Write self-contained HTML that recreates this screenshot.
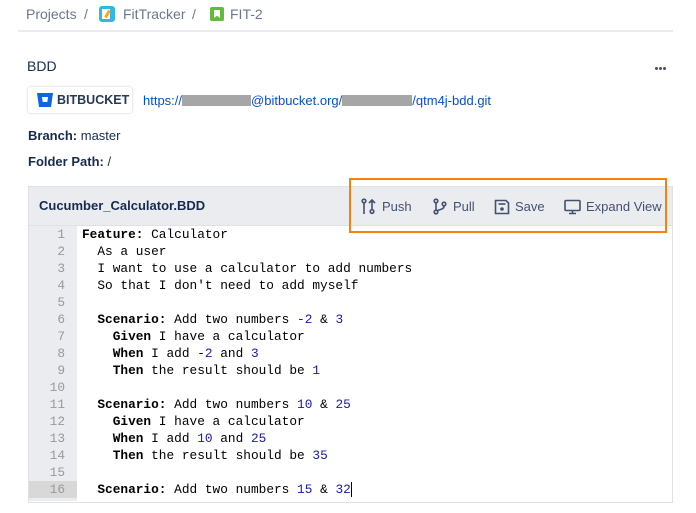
<!DOCTYPE html>
<html><head><style>
body{margin:0;width:696px;height:513px;background:#fff;font-family:"Liberation Sans",sans-serif;position:relative;overflow:hidden;color:#172b4d}
.a{position:absolute;white-space:nowrap}
.mono{font-family:"Liberation Mono",monospace;font-size:12.8px;color:#000}
.k{font-weight:bold}
.n{color:#1a1aa6}
.d{position:absolute;width:3px;height:3px;border-radius:50%;background:#42526e;top:67px}
</style></head><body>
<div class="a" style="left:26px;top:6px;font-size:14px;color:#6b778c">Projects</div>
<div class="a" style="left:84px;top:6px;font-size:14px;color:#6b778c">/</div>
<div class="a" style="left:99px;top:6px;width:16px;height:16px;background:#2fb8e6;border-radius:3px"><div style="position:absolute;left:3px;top:3px;width:8px;height:10px;background:#fff"></div><div style="position:absolute;left:7px;top:4px;width:3px;height:8px;background:#f5a623;transform:rotate(30deg)"></div></div>
<div class="a" style="left:123px;top:6px;font-size:14px;color:#6b778c">FitTracker</div>
<div class="a" style="left:192px;top:6px;font-size:14px;color:#6b778c">/</div>
<div class="a" style="left:210px;top:7px;width:14px;height:14px;background:#63ba3c;border-radius:2px"><div style="position:absolute;left:4px;top:3px;width:6px;height:8px;background:#fff;clip-path:polygon(0 0,100% 0,100% 100%,50% 70%,0 100%)"></div></div>
<div class="a" style="left:230px;top:6px;font-size:14px;color:#6b778c">FIT-2</div>
<div class="a" style="left:18px;top:30px;width:655px;height:2px;background:#ebecf0"></div>
<div class="a" style="left:27px;top:58px;font-size:14px">BDD</div>
<div class="d" style="left:655px"></div><div class="d" style="left:659px"></div><div class="d" style="left:663px"></div>
<div class="a" style="left:28px;top:87px;width:104px;height:26px;border-radius:3px;box-shadow:0 0 2px rgba(0,0,0,.25);background:#fff"></div>
<svg class="a" style="left:37px;top:93px" width="16" height="14" viewBox="0 0 16 14"><path d="M0 0H16L14 14H2Z" fill="#0c66e4"/><path d="M5 4H11L10.3 9H5.7Z" fill="#fff"/></svg>
<div class="a" style="left:57px;top:93px;font-size:12.5px;font-weight:bold;color:#253858">BITBUCKET</div>
<div class="a" style="left:143px;top:93px;font-size:13px;color:#0052cc">https://<span style="display:inline-block;width:69px;height:11px;background:#a6a6a6;vertical-align:-1px"></span>@bitbucket.org/<span style="display:inline-block;width:70px;height:11px;background:#a6a6a6;vertical-align:-1px"></span>/qtm4j-bdd.git</div>
<div class="a" style="left:28px;top:128px;font-size:13px"><b>Branch:</b> master</div>
<div class="a" style="left:28px;top:154px;font-size:13px"><b>Folder Path:</b> /</div>
<div class="a" style="left:28px;top:186px;width:643px;height:315px;border:1px solid #dfe1e6;background:#fff"></div>
<div class="a" style="left:29px;top:187px;width:643px;height:38px;background:#ebecf0;border-bottom:1px solid #dfe1e6"></div>
<div class="a" style="left:39px;top:198px;font-size:13px;font-weight:bold;color:#172b4d">Cucumber_Calculator.BDD</div>
<div class="a" style="left:349px;top:178px;width:314px;height:51px;border:2px solid #f7820b"></div>
<svg class="a" style="left:361px;top:198px" width="16" height="17" viewBox="0 0 16 17" fill="none" stroke="#42526e" stroke-width="1.6"><circle cx="3" cy="3" r="1.8"/><path d="M3 5V16"/><path d="M8 5L11 2L14 5M11 2V11"/><circle cx="11" cy="13.5" r="1.8"/></svg>
<div class="a" style="left:382px;top:199px;font-size:13px;color:#42526e">Push</div>
<svg class="a" style="left:433px;top:198px" width="14" height="17" viewBox="0 0 14 17" fill="none" stroke="#42526e" stroke-width="1.6"><circle cx="3" cy="3" r="1.8"/><circle cx="3" cy="14" r="1.8"/><path d="M3 5V12"/><circle cx="11" cy="6" r="1.8"/><path d="M11 8C11 12 6 11 4 13"/></svg>
<div class="a" style="left:453px;top:199px;font-size:13px;color:#42526e">Pull</div>
<svg class="a" style="left:494px;top:199px" width="16" height="16" viewBox="0 0 16 16" fill="none" stroke="#42526e" stroke-width="1.6"><path d="M1.5 1.5H12L14.5 4V14.5H1.5Z"/><path d="M4.5 5H11.5"/><circle cx="8" cy="10" r="1" fill="#42526e"/></svg>
<div class="a" style="left:515px;top:199px;font-size:13px;color:#42526e">Save</div>
<svg class="a" style="left:564px;top:199px" width="17" height="16" viewBox="0 0 17 16" fill="none" stroke="#42526e" stroke-width="1.6"><rect x="1" y="1.5" width="15" height="10" rx="1"/><path d="M8.5 11.5V14M5 14.5H12"/></svg>
<div class="a" style="left:586px;top:199px;font-size:13px;color:#42526e">Expand View</div>
<div class="a" style="left:29px;top:226px;width:48px;height:275px;background:#ebecf0"></div>
<div class="a" style="left:29px;top:481px;width:48px;height:17px;background:#d8d8d8"></div>
<div class="a mono" style="left:29px;top:226px;width:36px;text-align:right;color:#999;line-height:17px">1<br>2<br>3<br>4<br>5<br>6<br>7<br>8<br>9<br>10<br>11<br>12<br>13<br>14<br>15<br>16</div>
<pre class="a mono" style="left:82px;top:226px;margin:0;line-height:17px;white-space:pre"><span class="k">Feature:</span> Calculator
  As a user
  I want to use a calculator to add numbers
  So that I don't need to add myself

  <span class="k">Scenario:</span> Add two numbers <span class="n">-2</span> &amp; <span class="n">3</span>
    <span class="k">Given</span> I have a calculator
    <span class="k">When</span> I add -<span class="n">2</span> and <span class="n">3</span>
    <span class="k">Then</span> the result should be <span class="n">1</span>

  <span class="k">Scenario:</span> Add two numbers <span class="n">10</span> &amp; <span class="n">25</span>
    <span class="k">Given</span> I have a calculator
    <span class="k">When</span> I add <span class="n">10</span> and <span class="n">25</span>
    <span class="k">Then</span> the result should be <span class="n">35</span>

  <span class="k">Scenario:</span> Add two numbers <span class="n">15</span> &amp; <span class="n">32</span><span style="border-left:1px solid #000"></span></pre>
</body></html>
